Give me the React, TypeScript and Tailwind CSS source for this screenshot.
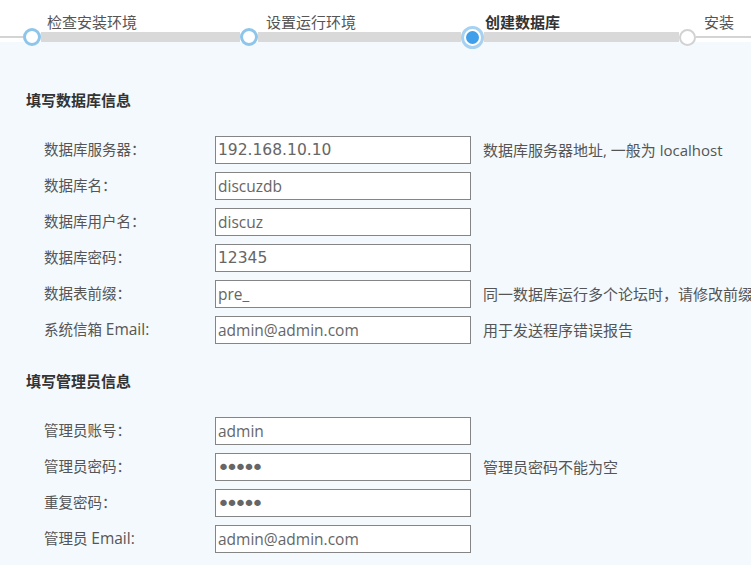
import React, { useEffect, useRef } from "react";

const font = "font-['Open_Sans','Noto_Sans_CJK_SC',sans-serif]";

type Field = {
  label: React.ReactNode;
  key: string;
  value: string;
  help?: string;
  digits?: boolean;
  password?: boolean;
  caret?: boolean;
};

const Email = () => <span className="text-[15.5px]">Email:</span>;

const dbFields: Field[] = [
  { key: "host", label: "数据库服务器：", value: "192.168.10.10", help: "数据库服务器地址, 一般为 localhost", digits: true },
  { key: "name", label: "数据库名：", value: "discuzdb" },
  { key: "user", label: "数据库用户名：", value: "discuz" },
  { key: "pw", label: "数据库密码：", value: "12345", digits: true },
  { key: "pre", label: "数据表前缀：", value: "pre_", help: "同一数据库运行多个论坛时，请修改前缀" },
  { key: "mail", label: <>系统信箱 <Email /></>, value: "admin@admin.com", help: "用于发送程序错误报告" },
];

const adminFields: Field[] = [
  { key: "admin", label: "管理员账号：", value: "admin" },
  { key: "apw", label: "管理员密码：", value: "12345", password: true, help: "管理员密码不能为空" },
  { key: "apw2", label: "重复密码：", value: "12345", password: true, caret: true },
  { key: "amail", label: <>管理员 <Email /></>, value: "admin@admin.com" },
];

const StepLabels = () => (
  <div className="flex h-[32px] pl-[47px] pt-[12px] text-[15px] leading-[20px] whitespace-nowrap">
    <span className="w-[219px] shrink-0 text-[#555]">检查安装环境</span>
    <span className="w-[219px] shrink-0 text-[#555]">设置运行环境</span>
    <span className="w-[219px] shrink-0 font-bold text-[#333]">创建数据库</span>
    <span className="w-[219px] shrink-0 text-[#555]">安装</span>
  </div>
);

const DoneDot = () => (
  <div className="w-[18px] h-[18px] shrink-0 rounded-full border-[3px] border-[#8ec5ea] bg-white" />
);

const Track = () => (
  <div className="flex items-center h-[18px] -mt-[4px]">
    <div className="w-[23px] h-[2px] shrink-0 bg-[#d4d4d4]" />
    <DoneDot />
    <div className="w-[199px] h-[10px] shrink-0 bg-[#d9d9d9]" />
    <DoneDot />
    <div className="w-[203px] h-[10px] shrink-0 bg-[#d9d9d9]" />
    <div className="w-[23px] h-[23px] shrink-0 rounded-full border-[3px] border-[#a6d1f0] bg-white flex items-center justify-center">
      <div className="w-[13px] h-[13px] rounded-full bg-[#3f9fea]" />
    </div>
    <div className="w-[195px] h-[10px] shrink-0 bg-[#d9d9d9]" />
    <div className="w-[17px] h-[17px] shrink-0 rounded-full border-2 border-[#d2d2d2] bg-white" />
    <div className="flex-1 h-[2px] bg-[#d4d4d4]" />
  </div>
);

const Row = ({ field }: { field: Field }) => {
  const ref = useRef<HTMLInputElement>(null);

  useEffect(() => {
    if (field.caret && ref.current) {
      ref.current.focus();
      ref.current.setSelectionRange(field.value.length, field.value.length);
    }
  }, [field]);

  let inputClass =
    "w-[256px] h-[28px] shrink-0 border border-[#858585] bg-white pl-[2px] outline-none text-[15.5px] text-[#666] font-['Open_Sans',sans-serif]";
  if (field.digits) {
    inputClass =
      "w-[256px] h-[28px] shrink-0 border border-[#858585] bg-white pl-[2px] outline-none text-[15.5px] text-[#666] font-['DejaVu_Sans',sans-serif]";
  }
  if (field.password) {
    inputClass =
      "w-[256px] h-[28px] shrink-0 border border-[#858585] bg-white pl-[1px] outline-none text-[22px] tracking-[-4.5px] text-[#666] caret-[#333] font-['DejaVu_Sans',sans-serif]";
  }

  return (
    <div className="flex items-center h-[28px] whitespace-nowrap">
      <span className="w-[171px] shrink-0 text-[14.5px] text-[#555]">{field.label}</span>
      <input
        ref={ref}
        type={field.password ? "password" : "text"}
        defaultValue={field.value}
        className={inputClass}
      />
      {field.help && <span className="ml-[12px] text-[15px] text-[#555]">{field.help}</span>}
    </div>
  );
};

const Section = ({ title, fields, first }: { title: string; fields: Field[]; first?: boolean }) => (
  <div className={first ? "" : "mt-[27px]"}>
    <h2 className="text-[15px] leading-[20px] font-bold text-[#333]">{title}</h2>
    <div className="mt-[26px] pl-[18px] flex flex-col gap-[8px]">
      {fields.map((f) => (
        <Row key={f.key} field={f} />
      ))}
    </div>
  </div>
);

export default function App() {
  return (
    <div className={`${font} w-full min-h-screen overflow-hidden bg-[#f3f9fc]`}>
      <div className="relative z-10 h-[42px] bg-white">
        <StepLabels />
        <Track />
      </div>
      <div className="px-[26px] pt-[48px] pb-[20px]">
        <Section title="填写数据库信息" fields={dbFields} first />
        <Section title="填写管理员信息" fields={adminFields} />
      </div>
    </div>
  );
}
